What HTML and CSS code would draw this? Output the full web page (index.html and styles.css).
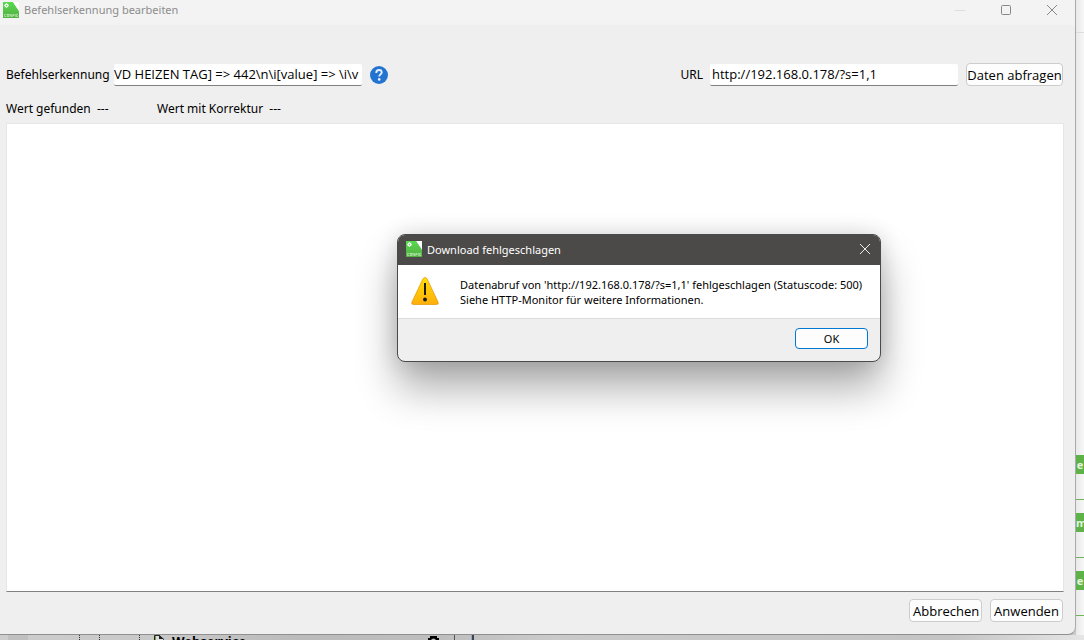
FILE: index.html
```html
<!DOCTYPE html>
<html lang="de">
<head>
<meta charset="utf-8">
<title>Befehlserkennung bearbeiten</title>
<link rel="stylesheet" href="styles.css">
</head>
<body>
<svg class="defs" width="0" height="0" aria-hidden="true">
  <defs>
    <linearGradient id="leaf" x1="0" y1="0" x2="0" y2="1"><stop offset="0" stop-color="#58dc50"/><stop offset="1" stop-color="#54ad42"/></linearGradient>
    <linearGradient id="amber" x1="0" y1="0" x2="0" y2="1"><stop offset="0" stop-color="#ffe000"/><stop offset="1" stop-color="#ffae0c"/></linearGradient>
    <symbol id="config" viewBox="0 0 16 16">
      <path d="M0 0h10l6 9v7H0z" fill="url(#leaf)"/>
      <path d="M10 0h6v9z" fill="#fff"/>
      <circle cx="3.5" cy="3.6" r="1.4" fill="none" stroke="#fff" stroke-width="1.2"/>
      <path d="M3.5 1.3v.8M3.5 5.1v.8M1.2 3.6H2M5 3.6h.8" stroke="#fff" stroke-width=".8"/>
      <g fill="none" stroke="#c4efbb" stroke-width=".7"><path d="M3.3 12.4H1.6v2.2h1.7"/><rect x="4.2" y="12.4" width="1.7" height="2.2"/><path d="M7 14.8v-2.6l1.7 2.6v-2.6M9.8 14.8v-2.4h1.7M9.8 13.5h1.4M12.3 12.2v2.6M15 12.4h-1.6v2.2H15v-1"/></g>
    </symbol>
  </defs>
</svg>
<div class="desktop">
  <main class="window">
    <header class="titlebar">
      <svg class="logo" aria-hidden="true"><use href="#config"/></svg>
      <h1>Befehlserkennung bearbeiten</h1>
      <button class="caption" aria-label="Minimieren" disabled><svg width="12" height="12"><path d="M1 6.500h10" stroke="#dedede"/></svg></button>
      <button class="caption" aria-label="Maximieren"><svg width="12" height="12"><rect x="1.500" y="1.500" width="9" height="9" rx="1" fill="none" stroke="#888"/></svg></button>
      <button class="caption" aria-label="Schließen"><svg width="12" height="12"><path d="M1 1l10 10M11 1L1 11" stroke="#888"/></svg></button>
    </header>
    <div class="content">
      <div class="row">
        <label class="pattern-label" for="pattern">Befehlserkennung</label>
        <input id="pattern" class="pattern" type="text" value="VD HEIZEN TAG] =&gt; 442\n\i[value] =&gt; \i\v">
        <button class="help" aria-label="Hilfe"><svg width="18" height="18" viewBox="0 0 18 18"><circle cx="9" cy="9" r="9" fill="#2374d1"/><path d="M6.300 7V6.600C6.300 4.900 7.400 4 9 4s2.700.9 2.700 2.400c0 1.800-2.500 2.200-2.500 4.200" fill="none" stroke="#e4efff" stroke-width="1.900"/><circle cx="9.200" cy="13.400" r="1.300" fill="#e4efff"/></svg></button>
        <label class="url-label" for="url">URL</label>
        <input id="url" class="url" type="text" value="http://192.168.0.178/?s=1,1">
        <button class="button">Daten abfragen</button>
      </div>
      <div class="results"><span class="found">Wert gefunden&nbsp; ---</span><span>Wert mit Korrektur&nbsp; ---</span></div>
      <textarea class="output" aria-label="Antwort" readonly></textarea>
      <footer class="actions"><button class="button">Abbrechen</button><button class="button">Anwenden</button></footer>
    </div>
  </main>
  <aside class="behind-right" aria-hidden="true">
    <span class="tag">e</span><span class="tag">m</span><span class="tag">e</span>
  </aside>
  <div class="behind-bottom" aria-hidden="true">
    <svg class="tree" width="172" height="6"><path d="M8 0h20v6H8z" fill="#c0c0c0"/><path d="M79.500 0v6M99.500 0v6M139.500 0v6" stroke="#333" stroke-dasharray="1 1"/><path d="M154.500 6V.5h5l4 4V6" fill="#ddd" stroke="#222"/><path d="M159 0v4h5z" fill="#222"/><path d="M155.500 1v5" stroke="#719d3d"/></svg>
    <b>Webservice</b>
    <svg class="gear" width="130" height="6"><path d="M8 6V3h2V1h7v2h2v3h-3a2.500 2.500 0 0 0-5 0z" fill="#000"/><path d="M34.500 0v6" stroke="#555"/><path d="M51.500 0v6" stroke="#8fa7d7"/><path d="M53 0v6" stroke="#444" stroke-width="2"/></svg>
  </div>
  <section class="dialog" role="alertdialog" aria-labelledby="dialog-title">
    <header class="dialog-title">
      <svg class="logo" aria-hidden="true"><use href="#config"/></svg>
      <h2 id="dialog-title">Download fehlgeschlagen</h2>
      <button class="close" aria-label="Schließen"><svg width="12" height="12"><path d="M1 1l10 10M11 1L1 11" stroke="#eee"/></svg></button>
    </header>
    <div class="message">
      <svg class="warning" viewBox="0 0 28 28" aria-hidden="true"><path d="M12 1.700Q14-.8 16 1.700L27 25Q28 27.500 25.500 27.500h-23Q0 27.500 1 25z" fill="url(#amber)" stroke="#e49a10" stroke-width=".8"/><path d="M14 6v12" stroke="#1c1c1c" stroke-width="2"/><circle cx="14" cy="22.500" r="1.900" fill="#1c1c1c"/></svg>
      <p>Datenabruf von 'http://192.168.0.178/?s=1,1' fehlgeschlagen (Statuscode: 500)<br>Siehe HTTP-Monitor für weitere Informationen.</p>
    </div>
    <footer class="dialog-actions"><button class="ok">OK</button></footer>
  </section>
</div>
</body>
</html>
```
FILE: styles.css
```css
* { box-sizing: border-box; }
body { margin: 0; font-family: "Noto Sans", sans-serif; font-size: 11px; color: #000; }
button, input, textarea { font: inherit; color: inherit; }
button { padding: 0; border: 0; background: none; }
h1, h2, p { margin: 0; font-size: 11px; font-weight: 400; }
svg { display: block; }
.defs { position: absolute; }
.desktop {
  position: relative;
  display: grid;
  grid-template-columns: 1fr 8px;
  grid-template-rows: 1fr 5px;
  height: 100vh;
  overflow: hidden;
  background: #cacaca;
}
.window {
  display: flex;
  flex-direction: column;
  min-width: 0;
  background: #efefef;
  border-right: 1px solid #aaa;
  border-bottom: 1px solid #909090;
  border-bottom-right-radius: 8px;
}
.titlebar { display: flex; align-items: center; height: 25px; padding-bottom: 6px; padding-left: 3px; background: #f3f3f3; color: #8c8c8c; }
.logo { flex: none; width: 16px; height: 16px; }
.titlebar h1 { flex: 1; margin-left: 5px; }
.caption { display: grid; place-items: center; width: 46px; height: 18px; }
.content { flex: 1; display: flex; flex-direction: column; padding: 38px 12px 12px 6px; font-size: 12px; }
.row { display: flex; align-items: center; height: 23px; }
.pattern, .url, .button { font-family: "Open Sans", "Noto Sans", sans-serif; font-size: 13px; }
.pattern, .url { height: 22px; border: 0; border-bottom: 1px solid #808080; border-radius: 2px; background: #fff; outline: 0; }
.pattern-label { width: 102px; white-space: nowrap; }
.pattern { width: 248px; margin-left: 6px; padding: 0; }
.url { width: 248px; margin: 0 8px 0 7px; padding: 0 2px; }
.help { margin-left: 8px; }
.url-label { margin-left: auto; }
.button { height: 23px; padding: 0 3px; border: 1px solid #ccc; border-radius: 4px; background: #fdfdfd; white-space: nowrap; }
.row .button { width: 97px; padding: 0; }
.results { display: flex; align-items: center; height: 18px; margin: 13px 0 6px; }
.found { width: 151px; }
.output { flex: 1; width: auto; margin: 0 -1px 0 0; border: 1px solid #e6e6e6; border-bottom-color: #808080; background: #fff; resize: none; outline: 0; }
.actions { display: flex; justify-content: flex-end; gap: 8px; margin-top: 7px; }
.actions .button { width: 73px; }
.behind-right {
  position: relative;
  display: flex;
  flex-direction: column;
  padding-top: 455px;
  overflow: hidden;
  background: linear-gradient(#ddd, #ddd) 0 32px / 100% 1px no-repeat, linear-gradient(90deg, #e9e9e9, #f7f7f7);
  color: #e5f3df;
  font-size: 11px;
  font-weight: 700;
}
.tag { flex: none; height: 19px; margin-bottom: 39px; background: #5fb247; line-height: 19px; text-align: center; }
.behind-right::after { content: ""; position: absolute; inset: 499px 0 auto; height: 117px; background: repeating-linear-gradient(#6fb45b 0 1px, transparent 1px 58px); }
.behind-bottom { grid-column: 1 / -1; display: flex; overflow: hidden; background: linear-gradient(90deg, #cdcdcd, #c9c9c9 150px, #bbb 300px, #bebebe 440px, #cacaca 550px, #c4c4c4 950px, #e5e5e5); line-height: 13px; }
.behind-bottom b { width: 78px; font-size: 13px; }
.gear { margin-left: 170px; }
.dialog {
  position: absolute;
  top: 234px;
  left: 397px;
  width: 484px;
  overflow: hidden;
  border: 1px solid #4b4a48;
  border-radius: 8px;
  background: #efefef;
  box-shadow: 0 26px 42px rgba(0, 0, 0, .33), 0 0 22px rgba(0, 0, 0, .14);
}
.dialog-title { display: flex; align-items: center; height: 30px; padding: 0 9px 2px 8px; background: #4b4a48; color: #fff; }
.dialog-title h2 { flex: 1; margin-left: 5px; }
.message { display: flex; align-items: flex-start; gap: 21px; padding: 12px 0 11px 13px; border-bottom: 1px solid #dcdcdc; background: #fff; }
.warning { flex: none; width: 28px; height: 28px; }
.message p { line-height: 15px; white-space: nowrap; }
.dialog-actions { display: flex; justify-content: flex-end; padding: 9px 12px 12px; }
.ok { width: 73px; height: 21px; border: 1px solid #0078d4; border-radius: 4px; background: #fdfdfd; }
```
